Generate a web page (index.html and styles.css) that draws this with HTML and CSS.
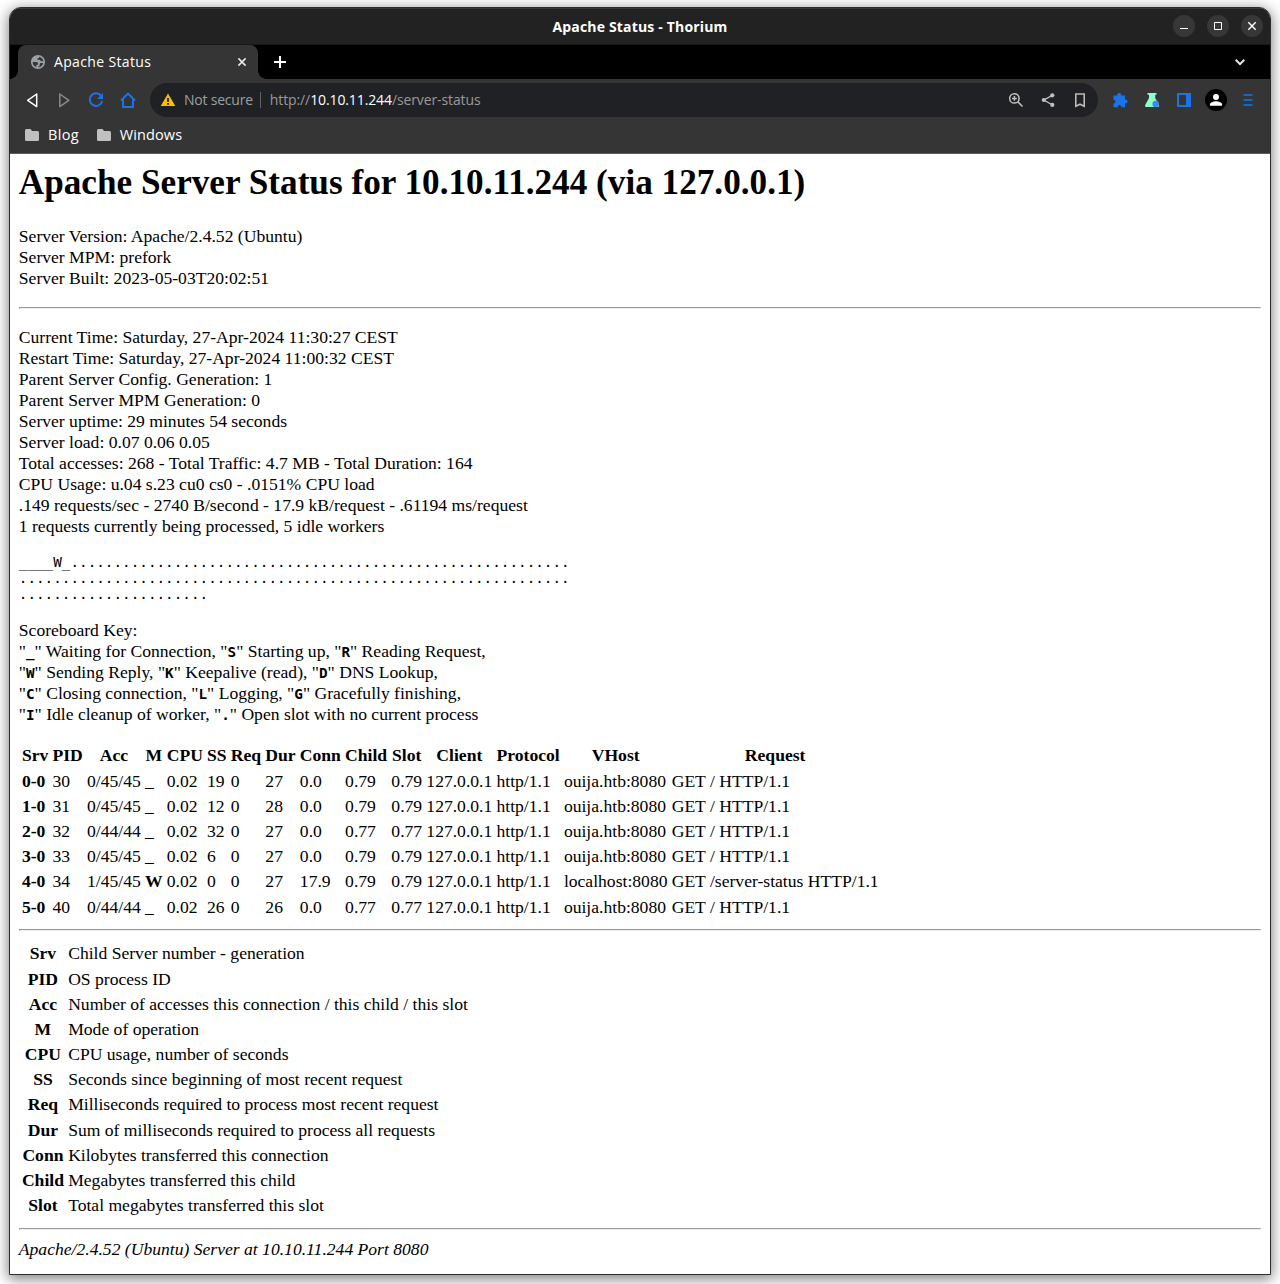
FILE: index.html
```html
<!DOCTYPE html>
<html lang="en">
<head>
<meta charset="utf-8">
<title>Apache Status</title>
<link rel="stylesheet" href="styles.css">
</head>
<body>
<div class="window">
  <header class="titlebar">
    <span class="title">Apache Status - Thorium</span>
    <div class="controls">
      <span class="control"><svg viewBox="0 0 22 22"><path d="M7 13.5h8"/></svg></span>
      <span class="control"><svg viewBox="0 0 22 22"><path d="M7.5 7.5h7v7h-7z"/></svg></span>
      <span class="control"><svg viewBox="0 0 22 22"><path d="M7.3 7.3l7.4 7.4M14.7 7.3l-7.4 7.4" stroke-width="1.4"/></svg></span>
    </div>
  </header>

  <div class="tabstrip">
    <div class="tab">
      <svg class="globe" viewBox="0 0 24 24"><path fill="#9aa0a6" d="M12 1.500C6.200 1.500 1.500 6.200 1.500 12S6.200 22.500 12 22.500 22.500 17.800 22.500 12 17.800 1.500 12 1.500zM4 12h5.500c1.600 0 2.500 1.200 2.500 2.700V16H9.500v3.600C6.300 18.500 4 15.500 4 12zm8.500 8v-1.500h2v-2.700c0-1.300.8-2.300 2-2.300h3.300c-.7 3.700-3.600 6.300-7.300 6.500zm7.500-9h-2.500c-.8 0-1.500-.5-1.800-1.200C15.300 9 14.500 8.500 13.500 8.500H11V6.800c1.800 0 3-1.100 3.200-2.500C17.300 5.200 19.500 7.800 20 11z"/></svg>
      <span class="tab-name">Apache Status</span>
      <svg class="tab-close" viewBox="0 0 16 16"><path d="M4.4 4.4l7.2 7.2M11.6 4.4l-7.2 7.2" stroke="#e8e8e8" stroke-width="1.6"/></svg>
    </div>
    <svg class="new-tab" viewBox="0 0 16 16"><path d="M8 2v12M2 8h12" stroke="#fff" stroke-width="2"/></svg>
    <svg class="tab-search" viewBox="0 0 16 16"><path d="M3.7 5.8L8 10.1l4.3-4.3" fill="none" stroke="#e8e8e8" stroke-width="2"/></svg>
  </div>

  <div class="toolbar">
    <span class="slot"><svg viewBox="0 0 20 20"><path d="M14.700 4v12.600L5.700 10.300z" fill="none" stroke="#fff" stroke-width="1.5" stroke-linejoin="round"/></svg></span>
    <span class="slot"><svg viewBox="0 0 20 20"><path d="M5.8 4v12.6l9-6.3z" fill="none" stroke="#8a8a8a" stroke-width="1.5" stroke-linejoin="round"/></svg></span>
    <span class="slot"><svg viewBox="0 0 20 20"><path d="M15.4 6.2A6.3 6.3 0 1 0 16.2 11" fill="none" stroke="#1a73e8" stroke-width="2"/><path d="M17 3v6h-6z" fill="#1a73e8"/></svg></span>
    <span class="slot"><svg viewBox="0 0 20 20"><path d="M3 10.5L10 3.6l7 6.9M5 9v8h10V9" fill="none" stroke="#1a73e8" stroke-width="2"/></svg></span>
    <div class="omnibox">
      <span class="slot"><svg viewBox="0 0 20 20"><path d="M10 3.500L17.300 16H2.700z" fill="#fbbc04"/><path d="M10 8v4M10 13v1.700" stroke="#202124" stroke-width="1.800"/></svg></span>
      <span class="secure">Not secure</span>
      <span class="divider"></span>
      <span class="url">http://<b>10.10.11.244</b>/server-status</span>
      <span class="slot"><svg viewBox="0 0 20 20" fill="none" stroke="#c0c0c0" stroke-width="1.5"><circle cx="8.4" cy="8.4" r="4.7"/><path d="M11.9 11.9l4.6 4.6M6 8.4h4.8M8.4 6v4.8"/></svg></span>
      <span class="slot"><svg viewBox="0 0 20 20"><path d="M14.5 5.3L5.8 10l8.7 5" fill="none" stroke="#c0c0c0" stroke-width="1.4"/><circle cx="14.3" cy="5.3" r="2.1" fill="#c0c0c0"/><circle cx="5.8" cy="10" r="2.1" fill="#c0c0c0"/><circle cx="14.3" cy="14.9" r="2.1" fill="#c0c0c0"/></svg></span>
      <span class="slot"><svg viewBox="0 0 20 20"><path d="M5.8 4h8.4v12.2L10 14.2l-4.2 2z" fill="none" stroke="#c0b8b8" stroke-width="1.6"/></svg></span>
    </div>
    <span class="slot"><svg viewBox="0 0 20 20"><path d="M3.500 5.500h3.700V5a2 2 0 0 1 4 0v.5H15v4h.5a2 2 0 0 1 0 4H15v3.700h-3.600v-.5a1.800 1.800 0 0 0-3.600 0v.5H3.500v-3.700H4a1.900 1.900 0 0 0 0-3.700h-.5z" fill="#1a73e8"/></svg></span>
    <span class="slot"><svg viewBox="0 0 20 20"><path d="M5.500 3h9v1.700h-1.300V8l4 7.500-.7 1.500h-13L3 15.500 7 8V4.700H5.500z" fill="#8dffc8"/><circle cx="13.700" cy="14" r="3.300" fill="#4285f4"/></svg></span>
    <span class="slot"><svg viewBox="0 0 20 20"><path d="M3 3h14v14H3zM5 5v10h7V5z" fill="#1a73e8" fill-rule="evenodd"/></svg></span>
    <span class="slot"><svg class="avatar" viewBox="0 0 22 22"><circle cx="11" cy="11" r="11" fill="#000"/><circle cx="11" cy="7.900" r="3" fill="#fff"/><path d="M5 16.800v-1.500c0-2 4-3 6-3s6 1 6 3v1.500z" fill="#fff"/></svg></span>
    <span class="slot"><svg viewBox="0 0 20 20"><path d="M5.500 5h9M5.500 10h9M5.500 15h9" stroke="#1b66c4" stroke-width="2"/></svg></span>
  </div>

  <nav class="bookmarks">
    <span class="bookmark"><svg viewBox="0 0 14 12"><path d="M0 1.500Q0 0 1.500 0H5.500L7 2h5.500Q14 2 14 3.500v7Q14 12 12.500 12h-11Q0 12 0 10.500z" fill="#c0c0c0"/></svg><span class="blog-name">Blog</span></span>
    <span class="bookmark"><svg viewBox="0 0 14 12"><path d="M0 1.500Q0 0 1.500 0H5.500L7 2h5.500Q14 2 14 3.500v7Q14 12 12.500 12h-11Q0 12 0 10.500z" fill="#c0c0c0"/></svg><span class="windows-name">Windows</span></span>
  </nav>

  <main class="page">
    <h1>Apache Server Status for 10.10.11.244 (via 127.0.0.1)</h1>
    <dl>
      <dt>Server Version: Apache/2.4.52 (Ubuntu)</dt>
      <dt>Server MPM: prefork</dt>
      <dt>Server Built: 2023-05-03T20:02:51</dt>
    </dl>
    <hr>
    <dl>
      <dt>Current Time: Saturday, 27-Apr-2024 11:30:27 CEST</dt>
      <dt>Restart Time: Saturday, 27-Apr-2024 11:00:32 CEST</dt>
      <dt>Parent Server Config. Generation: 1</dt>
      <dt>Parent Server MPM Generation: 0</dt>
      <dt>Server uptime:  29 minutes 54 seconds</dt>
      <dt>Server load: 0.07 0.06 0.05</dt>
      <dt>Total accesses: 268 - Total Traffic: 4.7 MB - Total Duration: 164</dt>
      <dt>CPU Usage: u.04 s.23 cu0 cs0 - .0151% CPU load</dt>
      <dt>.149 requests/sec - 2740 B/second - 17.9 kB/request - .61194 ms/request</dt>
      <dt>1 requests currently being processed, 5 idle workers</dt>
    </dl>
<pre>____W_..........................................................
................................................................
......................</pre>
    <p>Scoreboard Key:<br>
    "<b><code>_</code></b>" Waiting for Connection, "<b><code>S</code></b>" Starting up, "<b><code>R</code></b>" Reading Request,<br>
    "<b><code>W</code></b>" Sending Reply, "<b><code>K</code></b>" Keepalive (read), "<b><code>D</code></b>" DNS Lookup,<br>
    "<b><code>C</code></b>" Closing connection, "<b><code>L</code></b>" Logging, "<b><code>G</code></b>" Gracefully finishing,<br>
    "<b><code>I</code></b>" Idle cleanup of worker, "<b><code>.</code></b>" Open slot with no current process</p>
    <table class="workers">
      <tr><th>Srv</th><th>PID</th><th>Acc</th><th>M</th><th>CPU</th><th>SS</th><th>Req</th><th>Dur</th><th>Conn</th><th>Child</th><th>Slot</th><th>Client</th><th>Protocol</th><th>VHost</th><th>Request</th></tr>
      <tr><td><b>0-0</b></td><td>30</td><td>0/45/45</td><td>_</td><td>0.02</td><td>19</td><td>0</td><td>27</td><td>0.0</td><td>0.79</td><td>0.79</td><td>127.0.0.1</td><td>http/1.1</td><td>ouija.htb:8080</td><td>GET / HTTP/1.1</td></tr>
      <tr><td><b>1-0</b></td><td>31</td><td>0/45/45</td><td>_</td><td>0.02</td><td>12</td><td>0</td><td>28</td><td>0.0</td><td>0.79</td><td>0.79</td><td>127.0.0.1</td><td>http/1.1</td><td>ouija.htb:8080</td><td>GET / HTTP/1.1</td></tr>
      <tr><td><b>2-0</b></td><td>32</td><td>0/44/44</td><td>_</td><td>0.02</td><td>32</td><td>0</td><td>27</td><td>0.0</td><td>0.77</td><td>0.77</td><td>127.0.0.1</td><td>http/1.1</td><td>ouija.htb:8080</td><td>GET / HTTP/1.1</td></tr>
      <tr><td><b>3-0</b></td><td>33</td><td>0/45/45</td><td>_</td><td>0.02</td><td>6</td><td>0</td><td>27</td><td>0.0</td><td>0.79</td><td>0.79</td><td>127.0.0.1</td><td>http/1.1</td><td>ouija.htb:8080</td><td>GET / HTTP/1.1</td></tr>
      <tr><td><b>4-0</b></td><td>34</td><td>1/45/45</td><td><b>W</b></td><td>0.02</td><td>0</td><td>0</td><td>27</td><td>17.9</td><td>0.79</td><td>0.79</td><td>127.0.0.1</td><td>http/1.1</td><td>localhost:8080</td><td>GET /server-status HTTP/1.1</td></tr>
      <tr><td><b>5-0</b></td><td>40</td><td>0/44/44</td><td>_</td><td>0.02</td><td>26</td><td>0</td><td>26</td><td>0.0</td><td>0.77</td><td>0.77</td><td>127.0.0.1</td><td>http/1.1</td><td>ouija.htb:8080</td><td>GET / HTTP/1.1</td></tr>
    </table>
    <hr>
    <table class="legend">
      <tr><th>Srv</th><td>Child Server number - generation</td></tr>
      <tr><th>PID</th><td>OS process ID</td></tr>
      <tr><th>Acc</th><td>Number of accesses this connection / this child / this slot</td></tr>
      <tr><th>M</th><td>Mode of operation</td></tr>
      <tr><th>CPU</th><td>CPU usage, number of seconds</td></tr>
      <tr><th>SS</th><td>Seconds since beginning of most recent request</td></tr>
      <tr><th>Req</th><td>Milliseconds required to process most recent request</td></tr>
      <tr><th>Dur</th><td>Sum of milliseconds required to process all requests</td></tr>
      <tr><th>Conn</th><td>Kilobytes transferred this connection</td></tr>
      <tr><th>Child</th><td>Megabytes transferred this child</td></tr>
      <tr><th>Slot</th><td>Total megabytes transferred this slot</td></tr>
    </table>
    <hr>
    <address>Apache/2.4.52 (Ubuntu) Server at 10.10.11.244 Port 8080</address>
  </main>
</div>
</body>
</html>
```
FILE: styles.css
```css
* { box-sizing: border-box; }
body {
  margin: 0;
  height: 1284px;
  padding: 7px 9px 9px;
  background: #fff;
  overflow: hidden;
  font-family: "Open Sans", "Noto Sans", sans-serif;
  font-size: 14px;
  color: #fff;
}
.window {
  display: flex;
  flex-direction: column;
  height: 1268px;
  border: 1px solid #2c2b2d;
  border-radius: 12px 12px 0 0;
  overflow: hidden;
  background: #fff;
  box-shadow: 0 3px 14px 1px rgba(0, 0, 0, .5);
}
svg { display: block; }

.titlebar {
  display: grid;
  grid-template-columns: 1fr auto 1fr;
  align-items: center;
  height: 37px;
  background: #222;
  border-top: 1px solid #383838;
  border-bottom: 1px solid #191919;
}
.title { grid-column: 2; font-weight: 700; letter-spacing: .17px; }
.controls { display: flex; justify-content: flex-end; gap: 12px; padding-right: 7px; }
.control { width: 22px; height: 22px; margin-bottom: 1px; border-radius: 50%; background: #373737; }
.control svg { width: 22px; height: 22px; fill: none; stroke: #fff; stroke-width: 1; }

.tabstrip {
  display: flex;
  align-items: center;
  height: 34px;
  padding: 0 22px 0 8px;
  background: #000;
}
.tab {
  position: relative;
  display: flex;
  align-items: center;
  width: 240px;
  height: 34px;
  padding: 0 8px 0 12px;
  background: #353535;
  border-radius: 8px 8px 0 0;
}
.tab::before, .tab::after {
  content: "";
  position: absolute;
  bottom: 0;
  width: 8px;
  height: 8px;
}
.tab::before { left: -8px; background: radial-gradient(circle at 0 0, #000 7.5px, #353535 8px); }
.tab::after { right: -8px; background: radial-gradient(circle at 100% 0, #000 7.5px, #353535 8px); }
.globe { width: 16px; height: 16px; }
.tab-name { margin: 0 0 2px 8px; letter-spacing: .35px; }
.tab-close { width: 16px; height: 16px; margin-left: auto; }
.new-tab { width: 16px; height: 16px; margin-left: 14px; }
.tab-search { width: 16px; height: 16px; margin-left: auto; }

.toolbar {
  display: flex;
  align-items: center;
  height: 42px;
  padding: 0 6px;
  background: #353535;
}
.slot { flex: none; display: grid; place-items: center; width: 32px; height: 32px; }
.slot svg { width: 20px; height: 20px; }
.slot .avatar { width: 22px; height: 22px; }
.omnibox {
  flex: 1;
  display: flex;
  align-items: center;
  height: 34px;
  margin: 0 6px;
  padding: 0 2px;
  border-radius: 17px;
  background: #202124;
  color: #9aa0a6;
}
.secure { margin-bottom: 2px; letter-spacing: -.22px; }
.divider { width: 1px; height: 16px; margin: 0 9px 0 7px; background: #5f6368; }
.url { margin: 0 auto 2px 0; color: #9a9a9a; letter-spacing: -.11px; }
.url b { font-weight: 400; color: #fff; }

.bookmarks {
  display: flex;
  gap: 18px;
  height: 33px;
  padding: 0 15px 5px;
  align-items: center;
  background: #353535;
  border-bottom: 1px solid #5c5c5c;
}
.bookmark { display: flex; align-items: center; gap: 9px; }
.bookmark svg { width: 14px; height: 12px; }
.blog-name, .windows-name { font-size: 14.5px; }
.blog-name { letter-spacing: .3px; }
.windows-name { letter-spacing: .1px; }

.page {
  zoom: 1.1;
  padding: 8px;
  background: #fff;
  color: #000;
  font: 16px "Liberation Serif", serif;
}
h1 { margin: 0 0 .67em; font-size: 2em; }
pre, code { font-family: "DejaVu Sans Mono", monospace; font-size: 13px; }
pre { line-height: 14.5455px; }
code { line-height: 1; }
table { white-space: nowrap; }
```
